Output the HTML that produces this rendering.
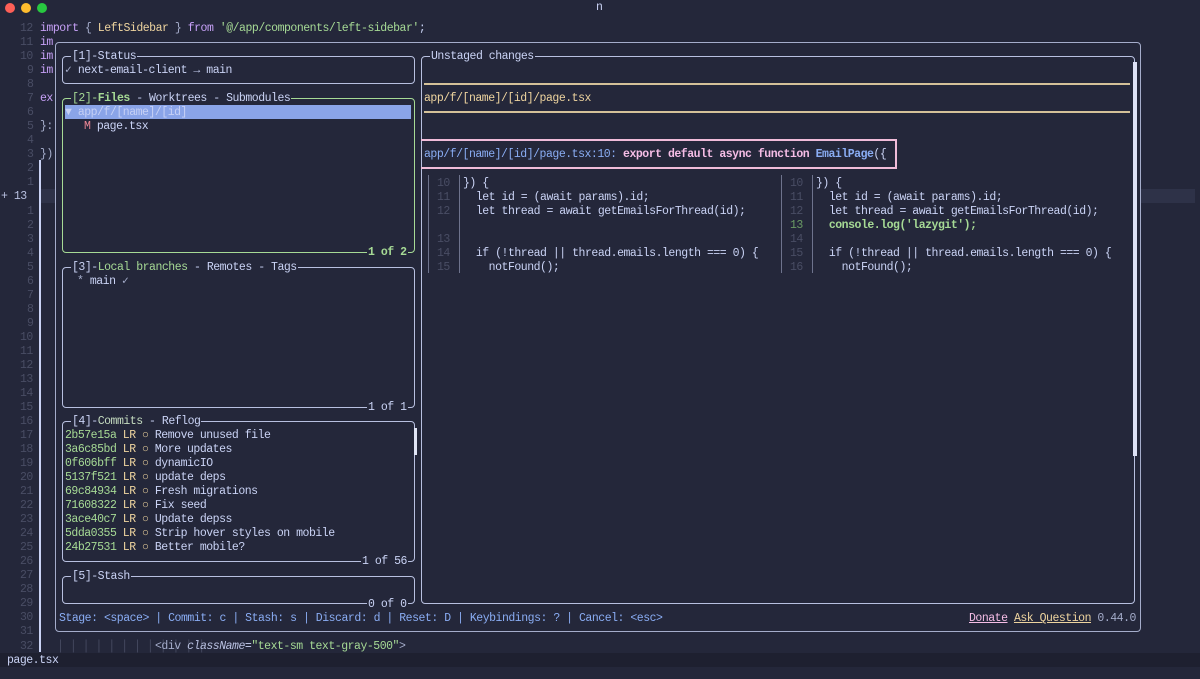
<!DOCTYPE html>
<html><head><meta charset="utf-8"><style>
html,body{margin:0;padding:0;}
body{width:1200px;height:679px;background:#24273a;position:relative;overflow:hidden;font-family:"Liberation Mono","DejaVu Sans Mono",monospace;font-size:11.5px;color:#cad3f5;}
.l{position:absolute;white-space:pre;line-height:14px;height:14px;transform:translateY(1px);}
.n{color:#494d64;}
.box{position:absolute;border:1px solid #b8c0e0;border-radius:4px;box-sizing:border-box;}
.t{position:absolute;white-space:pre;line-height:14px;background:#24273a;padding:0 1px;transform:translateY(1px);}
.g{color:#a6da95}.y{color:#eed49f}.b{color:#8aadf4}.p{color:#f5bde6}.r{color:#ed8796}.m{color:#c6a0f6}.s{color:#a5adcb}
#meas{position:absolute;left:0;top:-100px;white-space:pre;letter-spacing:0}
</style></head><body>
<span id="meas">0000000000000000000000000000000000000000000000000000000000000000000000000000000000000000000000000000</span>
<script>
(function(){var w=document.getElementById('meas').getBoundingClientRect().width/100;var ls=6.42-w;document.body.style.letterSpacing=ls+'px';})();
</script>
<!-- title bar -->
<div style="position:absolute;left:5px;top:3px;width:10px;height:10px;border-radius:50%;background:#fe5f57"></div>
<div style="position:absolute;left:21px;top:3px;width:10px;height:10px;border-radius:50%;background:#febc2e"></div>
<div style="position:absolute;left:37px;top:3px;width:10px;height:10px;border-radius:50%;background:#28c840"></div>
<div class="l" style="left:596px;top:0px;color:#cad3f5">n</div>

<div style="position:absolute;left:40px;top:189px;width:1155px;height:14px;background:#2e3248"></div>
<div style="position:absolute;left:39px;top:160px;width:2px;height:492px;background:#cad3f5"></div>

<div class="l n" style="left:20px;top:21px">12</div>
<div class="l n" style="left:20px;top:35px">11</div>
<div class="l n" style="left:20px;top:49px">10</div>
<div class="l n" style="left:27px;top:63px">9</div>
<div class="l n" style="left:27px;top:77px">8</div>
<div class="l n" style="left:27px;top:91px">7</div>
<div class="l n" style="left:27px;top:105px">6</div>
<div class="l n" style="left:27px;top:119px">5</div>
<div class="l n" style="left:27px;top:133px">4</div>
<div class="l n" style="left:27px;top:147px">3</div>
<div class="l n" style="left:27px;top:161px">2</div>
<div class="l n" style="left:27px;top:175px">1</div>
<div class="l" style="left:1px;top:189px;color:#b8c0e0">+ 13</div>
<div class="l n" style="left:27px;top:204px">1</div>
<div class="l n" style="left:27px;top:218px">2</div>
<div class="l n" style="left:27px;top:232px">3</div>
<div class="l n" style="left:27px;top:246px">4</div>
<div class="l n" style="left:27px;top:260px">5</div>
<div class="l n" style="left:27px;top:274px">6</div>
<div class="l n" style="left:27px;top:288px">7</div>
<div class="l n" style="left:27px;top:302px">8</div>
<div class="l n" style="left:27px;top:316px">9</div>
<div class="l n" style="left:20px;top:330px">10</div>
<div class="l n" style="left:20px;top:344px">11</div>
<div class="l n" style="left:20px;top:358px">12</div>
<div class="l n" style="left:20px;top:372px">13</div>
<div class="l n" style="left:20px;top:386px">14</div>
<div class="l n" style="left:20px;top:400px">15</div>
<div class="l n" style="left:20px;top:414px">16</div>
<div class="l n" style="left:20px;top:428px">17</div>
<div class="l n" style="left:20px;top:442px">18</div>
<div class="l n" style="left:20px;top:456px">19</div>
<div class="l n" style="left:20px;top:470px">20</div>
<div class="l n" style="left:20px;top:484px">21</div>
<div class="l n" style="left:20px;top:498px">22</div>
<div class="l n" style="left:20px;top:512px">23</div>
<div class="l n" style="left:20px;top:526px">24</div>
<div class="l n" style="left:20px;top:540px">25</div>
<div class="l n" style="left:20px;top:554px">26</div>
<div class="l n" style="left:20px;top:568px">27</div>
<div class="l n" style="left:20px;top:582px">28</div>
<div class="l n" style="left:20px;top:596px">29</div>
<div class="l n" style="left:20px;top:610px">30</div>
<div class="l n" style="left:20px;top:624px">31</div>
<div class="l n" style="left:20px;top:639px">32</div>
<div class="l" style="left:40px;top:21px"><span class="m">import</span> <span class="s">{</span> <span class="y">LeftSidebar</span> <span class="s">}</span> <span class="m">from</span> <span class="g">'@/app/components/left-sidebar'</span>;</div>
<div class="l m" style="left:40px;top:35px">im</div>
<div class="l m" style="left:40px;top:49px">im</div>
<div class="l m" style="left:40px;top:63px">im</div>
<div class="l m" style="left:40px;top:91px">ex</div>
<div class="l s" style="left:40px;top:119px">}:</div>
<div class="l s" style="left:40px;top:147px">})</div>
<div class="l n" style="left:57px;top:639px">│ │ │ │ │ │ │ │ │ │ │ │</div>
<div class="l" style="left:155px;top:639px"><span class="s">&lt;div</span> <i style="color:#b8c0e0">className</i>=<span class="g">"text-sm text-gray-500"</span><span class="s">&gt;</span></div>
<div style="position:absolute;left:0;top:653px;width:1200px;height:14px;background:#1e2030"></div>
<div class="l" style="left:7px;top:653px">page.tsx</div>

<div class="box" style="left:55px;top:42px;width:1086px;height:590px;background:#24273a;border-color:#a5adcb"></div>

<div class="box" style="left:62px;top:56px;width:353px;height:28px"></div>
<div class="t" style="left:71px;top:49px">[1]-Status</div>
<div class="l" style="left:65px;top:63px"><span class="s">✓</span> next-email-client → main</div>

<div class="box" style="left:62px;top:98px;width:353px;height:155px;border-color:#a6da95"></div>
<div class="t" style="left:71px;top:91px"><span class="g">[2]-<b>Files</b></span> - Worktrees - Submodules</div>
<div style="position:absolute;left:65px;top:105px;width:346px;height:14px;background:#8aa4e8"></div>
<div class="l" style="left:65px;top:105px;color:#c6d0f5">▼ app/f/[name]/[id]</div>
<div class="l" style="left:84px;top:119px"><span class="r">M</span> page.tsx</div>
<div class="t g" style="left:367px;top:245px"><b>1 of 2</b></div>

<div class="box" style="left:62px;top:267px;width:353px;height:141px"></div>
<div class="t" style="left:71px;top:260px">[3]-<span class="g">Local branches</span> - Remotes - Tags</div>
<div class="l" style="left:77px;top:274px"><span class="s">*</span> main <span class="s">✓</span></div>
<div class="t" style="left:367px;top:400px">1 of 1</div>

<div class="box" style="left:62px;top:421px;width:353px;height:141px"></div>
<div class="t" style="left:71px;top:414px">[4]-<span style="color:#c5dcc0">Commits</span> - Reflog</div>
<div style="position:absolute;left:414px;top:428px;width:3px;height:27px;background:#e0e4f5"></div>
<div class="l" style="left:65px;top:428px"><span class="g">2b57e15a</span> <span class="y">LR</span> <span class="y">○</span> Remove unused file</div>
<div class="l" style="left:65px;top:442px"><span class="g">3a6c85bd</span> <span class="y">LR</span> <span class="y">○</span> More updates</div>
<div class="l" style="left:65px;top:456px"><span class="g">0f606bff</span> <span class="y">LR</span> <span class="y">○</span> dynamicIO</div>
<div class="l" style="left:65px;top:470px"><span class="g">5137f521</span> <span class="y">LR</span> <span class="y">○</span> update deps</div>
<div class="l" style="left:65px;top:484px"><span class="g">69c84934</span> <span class="y">LR</span> <span class="y">○</span> Fresh migrations</div>
<div class="l" style="left:65px;top:498px"><span class="g">71608322</span> <span class="y">LR</span> <span class="y">○</span> Fix seed</div>
<div class="l" style="left:65px;top:512px"><span class="g">3ace40c7</span> <span class="y">LR</span> <span class="y">○</span> Update depss</div>
<div class="l" style="left:65px;top:526px"><span class="g">5dda0355</span> <span class="y">LR</span> <span class="y">○</span> Strip hover styles on mobile</div>
<div class="l" style="left:65px;top:540px"><span class="g">24b27531</span> <span class="y">LR</span> <span class="y">○</span> Better mobile?</div>
<div class="t" style="left:361px;top:554px">1 of 56</div>

<div class="box" style="left:62px;top:576px;width:353px;height:28px"></div>
<div class="t" style="left:71px;top:569px">[5]-Stash</div>
<div class="t" style="left:367px;top:597px">0 of 0</div>

<div class="l b" style="left:59px;top:611px">Stage: &lt;space&gt; | Commit: c | Stash: s | Discard: d | Reset: D | Keybindings: ? | Cancel: &lt;esc&gt;</div>
<div class="l" style="left:969px;top:611px"><span style="color:#f5bde6;text-decoration:underline">Donate</span> <span class="y" style="text-decoration:underline">Ask Question</span> <span class="s">0.44.0</span></div>

<div class="box" style="left:421px;top:56px;width:714px;height:548px"></div>
<div class="t" style="left:430px;top:49px">Unstaged changes</div>
<div style="position:absolute;left:424px;top:83px;width:706px;height:2px;background:#d4c199"></div>
<div style="position:absolute;left:424px;top:111px;width:706px;height:2px;background:#d4c199"></div>
<div class="l y" style="left:424px;top:91px">app/f/[name]/[id]/page.tsx</div>
<div style="position:absolute;left:421px;top:139px;width:476px;height:30px;border:2px solid #f0bcd9;border-left:none;box-sizing:border-box"></div>
<div class="l" style="left:424px;top:147px"><span class="b">app/f/[name]/[id]/page.tsx:10:</span> <b class="p">export default async function</b> <b class="b">EmailPage</b>({</div>
<div style="position:absolute;left:1133px;top:62px;width:4px;height:394px;background:#dde1f5"></div>

<div style="position:absolute;left:428px;top:175px;width:1px;height:98px;background:#6e738d"></div>
<div style="position:absolute;left:459px;top:175px;width:1px;height:98px;background:#6e738d"></div>
<div class="l n" style="left:437px;top:176px">10</div>
<div class="l n" style="left:437px;top:190px">11</div>
<div class="l n" style="left:437px;top:204px">12</div>
<div class="l n" style="left:437px;top:232px">13</div>
<div class="l n" style="left:437px;top:246px">14</div>
<div class="l n" style="left:437px;top:260px">15</div>
<div class="l" style="left:463px;top:176px">}) {</div>
<div class="l" style="left:463px;top:190px">  let id = (await params).id;</div>
<div class="l" style="left:463px;top:204px">  let thread = await getEmailsForThread(id);</div>
<div class="l" style="left:463px;top:246px">  if (!thread || thread.emails.length === 0) {</div>
<div class="l" style="left:463px;top:260px">    notFound();</div>

<div style="position:absolute;left:781px;top:175px;width:1px;height:98px;background:#6e738d"></div>
<div style="position:absolute;left:812px;top:175px;width:1px;height:98px;background:#6e738d"></div>
<div class="l n" style="left:790px;top:176px">10</div>
<div class="l n" style="left:790px;top:190px">11</div>
<div class="l n" style="left:790px;top:204px">12</div>
<div class="l" style="left:790px;top:218px;color:#6a9a64">13</div>
<div class="l n" style="left:790px;top:232px">14</div>
<div class="l n" style="left:790px;top:246px">15</div>
<div class="l n" style="left:790px;top:260px">16</div>
<div class="l" style="left:816px;top:176px">}) {</div>
<div class="l" style="left:816px;top:190px">  let id = (await params).id;</div>
<div class="l" style="left:816px;top:204px">  let thread = await getEmailsForThread(id);</div>
<div class="l g" style="left:816px;top:218px">  <b>console.log('lazygit');</b></div>
<div class="l" style="left:816px;top:246px">  if (!thread || thread.emails.length === 0) {</div>
<div class="l" style="left:816px;top:260px">    notFound();</div>
</body></html>
